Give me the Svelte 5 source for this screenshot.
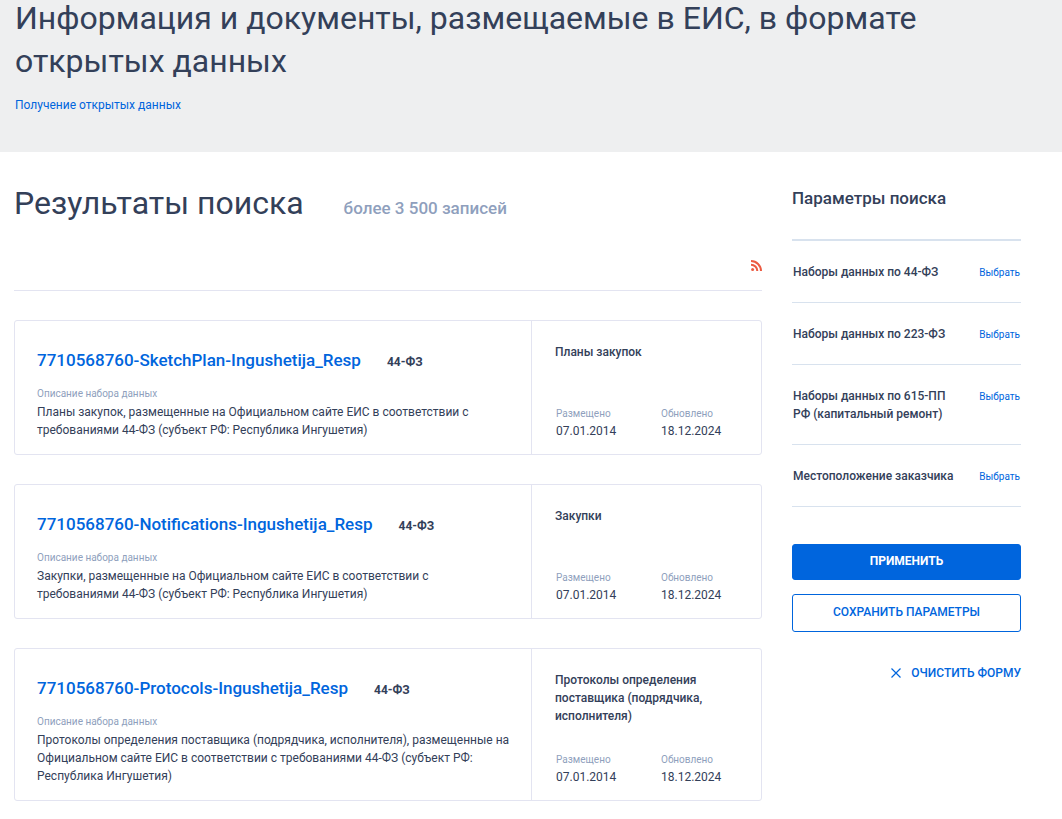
<script>
  const cards = [
    {
      name: '7710568760-SketchPlan-Ingushetija_Resp',
      text: 'Планы закупок, размещенные на Официальном сайте ЕИС в соответствии с требованиями 44-ФЗ (субъект РФ: Республика Ингушетия)',
      kind: 'Планы закупок'
    },
    {
      name: '7710568760-Notifications-Ingushetija_Resp',
      text: 'Закупки, размещенные на Официальном сайте ЕИС в соответствии с требованиями 44-ФЗ (субъект РФ: Республика Ингушетия)',
      kind: 'Закупки'
    },
    {
      name: '7710568760-Protocols-Ingushetija_Resp',
      text: 'Протоколы определения поставщика (подрядчика, исполнителя), размещенные на Официальном сайте ЕИС в соответствии с требованиями 44-ФЗ (субъект РФ: Республика Ингушетия)',
      kind: 'Протоколы определения поставщика (подрядчика, исполнителя)'
    }
  ];
  const filters = [
    'Наборы данных по 44-ФЗ',
    'Наборы данных по 223-ФЗ',
    'Наборы данных по 615-ПП РФ (капитальный ремонт)',
    'Местоположение заказчика'
  ];
</script>

<header>
  <h1>Информация и документы, размещаемые в ЕИС, в формате открытых данных</h1>
  <a href="#open-data">Получение открытых данных</a>
</header>

<div class="page">
  <main>
    <div class="heading">
      <h2>Результаты поиска</h2>
      <span class="total">более 3 500 записей</span>
    </div>
    <div class="tools">
      <a href="#rss" aria-label="RSS">
        <svg width="11" height="11" viewBox="0 0 11 11" fill="none" stroke="#ec5a41" stroke-width="2">
          <circle cx="1.6" cy="9.4" r="1.5" fill="#ec5a41" stroke="none" />
          <path d="M0 4.7a6.3 6.3 0 0 1 6.3 6.3M0 1a10 10 0 0 1 10 10" />
        </svg>
      </a>
    </div>

    {#each cards as card}
      <article>
        <div class="info">
          <div class="title">
            <a href="#set">{card.name}</a>
            <b>44-ФЗ</b>
          </div>
          <div class="label">Описание набора данных</div>
          <p>{card.text}</p>
        </div>
        <div class="meta">
          <h3>{card.kind}</h3>
          <dl>
            <div><dt>Размещено</dt><dd>07.01.2014</dd></div>
            <div><dt>Обновлено</dt><dd>18.12.2024</dd></div>
          </dl>
        </div>
      </article>
    {/each}
  </main>

  <aside>
    <h2>Параметры поиска</h2>
    <ul>
      {#each filters as name}
        <li><span>{name}</span><a href="#choose">Выбрать</a></li>
      {/each}
    </ul>
    <button class="apply">Применить</button>
    <button class="save">Сохранить параметры</button>
    <button class="clear">
      <svg width="10" height="10" viewBox="0 0 10 10" stroke="#0065dd" stroke-width="1.2"><path d="M0.5 0.5l9 9M9.5 0.5l-9 9" /></svg>
      Очистить форму
    </button>
  </aside>
</div>

<style>
  :global(body) {
    background: #fff;
    color: #334059;
    font-family: Roboto, 'Liberation Sans', sans-serif;
    font-size: 12px;
    line-height: 18px;
  }
  h1, h2, h3, p, dl, dd, ul {
    margin: 0;
    padding: 0;
  }
  a {
    color: #0065dd;
    text-decoration: none;
  }
  header {
    margin-top: -3px;
    padding: 0 15px 38px;
    background: #eeeff0;
  }
  h1 {
    max-width: 960px;
    margin-bottom: 13px;
    font-size: 32px;
    font-weight: 400;
    line-height: 43px;
  }
  .page {
    display: grid;
    grid-template-columns: minmax(0, 1fr) 229px;
    gap: 30px;
    padding: 30px 41px 18px 14px;
  }
  .heading {
    display: flex;
    align-items: baseline;
    gap: 40px;
  }
  .heading h2 {
    font-size: 32px;
    font-weight: 400;
    line-height: 43px;
  }
  .total {
    color: #8f9fbd;
    font-size: 17px;
    font-weight: 500;
  }
  .tools {
    display: flex;
    justify-content: flex-end;
    padding: 35px 0 19px;
    border-bottom: 1px solid #e3e4f1;
  }
  .tools a, .tools svg {
    display: block;
  }
  article {
    display: grid;
    grid-template-columns: minmax(0, 1fr) 230px;
    margin-top: 29px;
    border: 1px solid #e3e4f1;
    border-radius: 3px;
  }
  .info {
    padding: 27px 20px 15px 22px;
  }
  .title {
    display: flex;
    align-items: baseline;
    gap: 26px;
    margin-bottom: 11px;
    line-height: 24px;
  }
  .title a {
    font-size: 17px;
    font-weight: 500;
  }
  .label, dt {
    color: #8f9fbd;
    font-size: 10px;
    line-height: 18px;
  }
  dt {
    line-height: 16px;
  }
  .meta {
    display: flex;
    flex-direction: column;
    justify-content: space-between;
    gap: 27px;
    border-left: 1px solid #e3e4f1;
    padding: 22px 23px 14px;
  }
  h3 {
    font-size: 12px;
    font-weight: 500;
  }
  dl {
    display: grid;
    grid-template-columns: 1fr 1fr;
    gap: 28px;
    padding-left: 1px;
  }
  aside h2 {
    padding: 6px 0 31px;
    border-bottom: 2px solid #d8e2ee;
    font-size: 17px;
    font-weight: 500;
    line-height: 20px;
  }
  ul {
    list-style: none;
    margin-bottom: 37px;
  }
  li {
    display: flex;
    justify-content: space-between;
    gap: 24px;
    padding: 22px 1px 21px;
    border-bottom: 1px solid #d8e2ee;
    font-weight: 500;
  }
  li a {
    font-size: 10px;
    font-weight: 400;
    line-height: 20px;
    margin-bottom: -2px;
  }
  button {
    box-sizing: border-box;
    display: block;
    width: 100%;
    padding: 0 0 3px;
    border: 1px solid #0065dd;
    border-radius: 3px;
    background: #fff;
    color: #0065dd;
    font: 500 12px/16px Roboto, 'Liberation Sans', sans-serif;
    text-transform: uppercase;
    cursor: pointer;
  }
  .apply {
    height: 36px;
    background: #0065dd;
    color: #fff;
    font-weight: 700;
  }
  .save {
    height: 38px;
    margin-top: 14px;
  }
  .clear {
    display: flex;
    align-items: center;
    justify-content: flex-end;
    gap: 10px;
    margin-top: 33px;
    padding: 0;
    border: 0;
  }
</style>
